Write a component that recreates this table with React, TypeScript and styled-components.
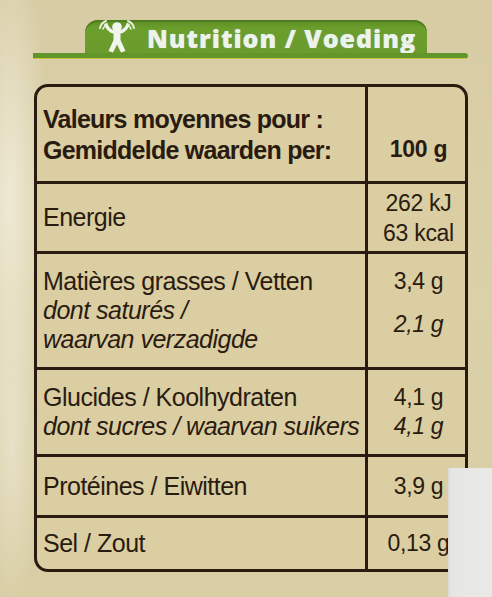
import React from 'react'
import styled, { createGlobalStyle, css } from 'styled-components'

const GlobalStyle = createGlobalStyle`
  html, body {
    margin: 0;
    padding: 0;
  }
  body {
    font-family: 'Liberation Sans', Arial, sans-serif;
    background: #d8cda5;
  }
`

const ink = '#2a1b10'

const Page = styled.div`
  position: relative;
  width: 492px;
  height: 597px;
  overflow: hidden;
  padding-top: 20px;
  box-sizing: border-box;
  background:
    radial-gradient(ellipse 40px 260px at 10px 200px, rgba(245, 242, 228, 0.75), rgba(245, 242, 228, 0) 100%),
    radial-gradient(ellipse 30px 160px at 12px 450px, rgba(240, 236, 220, 0.6), rgba(240, 236, 220, 0) 100%),
    linear-gradient(180deg, #d7cca4 0%, #dbd1a9 50%, #d8cda3 100%);
`

const Banner = styled.div`
  margin-left: 33px;
  width: 435px;
  display: flex;
  flex-direction: column;
`

const Tab = styled.div`
  margin-left: 52px;
  width: 342px;
  height: 33px;
  box-sizing: border-box;
  display: flex;
  align-items: center;
  gap: 9px;
  padding-left: 11px;
  border-radius: 13px 13px 0 0;
  background: linear-gradient(180deg, #5a8c24 0%, #6c9e2c 25%, #6a9b2c 100%);
  box-shadow: inset 0 2px 0 #4e7e1f;
`

const TabTitle = styled.span`
  font-family: 'Open Sans', 'DejaVu Sans', sans-serif;
  font-weight: 800;
  font-size: 25px;
  letter-spacing: 1px;
  color: #eef3ea;
  text-shadow: 0 0 1px #9cc8d6;
  line-height: 1;
  margin-top: 3px;
  white-space: nowrap;
`

const GreenLine = styled.div`
  height: 5px;
  background: #62952a;
  border-bottom: 1px solid #c8c23f;
  border-radius: 0 3px 3px 0;
`

const Table = styled.div`
  margin: 25px 0 0 34px;
  width: 434px;
  border: 3px solid ${ink};
  border-radius: 14px;
  box-sizing: border-box;
  background: #dacea2;
  overflow: hidden;
`

const Row = styled.div<{ h: number; last?: boolean }>`
  display: grid;
  grid-template-columns: 331px 1fr;
  height: ${({ h }) => h}px;
  box-sizing: border-box;
  border-bottom: ${({ last }) => (last ? 'none' : `3px solid ${ink}`)};
`

const Label = styled.div<{ head?: boolean }>`
  display: flex;
  flex-direction: column;
  justify-content: center;
  padding-left: 6px;
  border-right: 3px solid ${ink};
  color: ${ink};
  font-size: 25px;
  letter-spacing: -0.5px;
  line-height: 29px;
  ${({ head }) =>
    head &&
    css`
      font-weight: 700;
      letter-spacing: -0.75px;
      line-height: 31px;
      padding-top: 2px;
    `}
`

const Line = styled.span<{ italic?: boolean }>`
  font-style: ${({ italic }) => (italic ? 'italic' : 'normal')};
  white-space: nowrap;
`

const Value = styled.div<{ head?: boolean; lh?: number; pb?: number }>`
  display: flex;
  flex-direction: column;
  justify-content: center;
  align-items: center;
  padding-left: 4px;
  padding-bottom: ${({ pb }) => pb || 0}px;
  color: ${ink};
  font-size: 23px;
  letter-spacing: -0.3px;
  line-height: ${({ lh }) => lh || 29}px;
  white-space: nowrap;
  ${({ head }) =>
    head &&
    css`
      font-weight: 700;
      font-size: 23px;
      padding-top: 30px;
    `}
`

const Spaced = styled(Line)<{ mt?: number }>`
  margin-top: ${({ mt }) => mt || 0}px;
`

const Sticker = styled.div`
  position: absolute;
  left: 448px;
  top: 468px;
  right: 0;
  bottom: 0;
  background: linear-gradient(90deg, #d9d9d6 0px, #e6e6e4 3px, #e9e9e7 100%);
`

function FigureIcon() {
  return (
    <svg width="42" height="34" viewBox="0 0 42 34" fill="none">
      <circle cx="21" cy="7" r="4.8" fill="#f2f4ee" />
      <path
        d="M8 4 C10 10 14 13 17.5 13.5 L17.5 20 L12.5 31 L17 32.5 L21 24.5 L25 32.5 L29.5 31 L24.5 20 L24.5 13.5 C28 13 32 10 34 4 L31 3 C29 8 26 10.5 21 10.5 C16 10.5 13 8 11 3 Z"
        fill="#f2f4ee"
      />
      <path d="M4 8 C5 4 7 2 10 1" stroke="#e6efdc" strokeWidth="2" strokeLinecap="round" />
      <path d="M7 9 C8 6 9 5 11 4" stroke="#e6efdc" strokeWidth="1.6" strokeLinecap="round" />
      <path d="M38 8 C37 4 35 2 32 1" stroke="#e6efdc" strokeWidth="2" strokeLinecap="round" />
      <path d="M35 9 C34 6 33 5 31 4" stroke="#e6efdc" strokeWidth="1.6" strokeLinecap="round" />
    </svg>
  )
}

export default function App() {
  return (
    <>
      <GlobalStyle />
      <Page>
        <Banner>
          <Tab>
            <FigureIcon />
            <TabTitle>Nutrition / Voeding</TabTitle>
          </Tab>
          <GreenLine />
        </Banner>

        <Table>
          <Row h={97}>
            <Label head>
              <Line>Valeurs moyennes pour :</Line>
              <Line>Gemiddelde waarden per:</Line>
            </Label>
            <Value head>100 g</Value>
          </Row>

          <Row h={70}>
            <Label>
              <Line>Energie</Line>
            </Label>
            <Value lh={30}>
              <Line>262 kJ</Line>
              <Line>63 kcal</Line>
            </Value>
          </Row>

          <Row h={116}>
            <Label>
              <Line>Matières grasses / Vetten</Line>
              <Line italic>dont saturés /</Line>
              <Line italic>waarvan verzadigde</Line>
            </Label>
            <Value pb={15}>
              <Line>3,4 g</Line>
              <Spaced italic mt={14}>
                2,1 g
              </Spaced>
            </Value>
          </Row>

          <Row h={87}>
            <Label>
              <Line>Glucides / Koolhydraten</Line>
              <Line italic>dont sucres / waarvan suikers</Line>
            </Label>
            <Value>
              <Line>4,1 g</Line>
              <Line italic>4,1 g</Line>
            </Value>
          </Row>

          <Row h={61}>
            <Label>
              <Line>Protéines / Eiwitten</Line>
            </Label>
            <Value>3,9 g</Value>
          </Row>

          <Row h={51} last>
            <Label>
              <Line>Sel / Zout</Line>
            </Label>
            <Value>0,13 g</Value>
          </Row>
        </Table>

        <Sticker />
      </Page>
    </>
  )
}
